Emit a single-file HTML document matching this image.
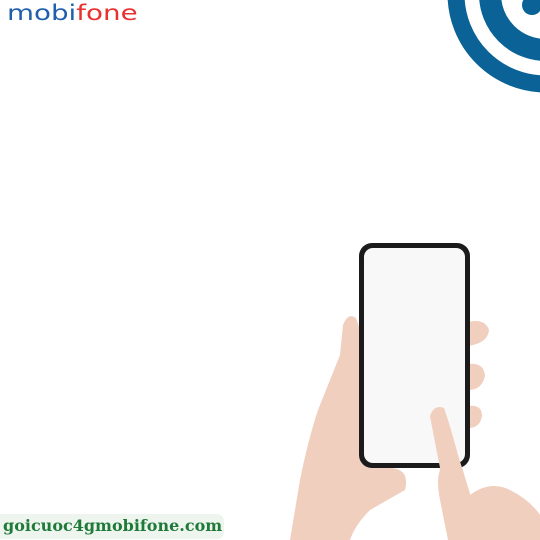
<!DOCTYPE html>
<html><head><meta charset="utf-8"><style>
html,body{margin:0;padding:0;background:#fff;}
body{width:540px;height:540px;position:relative;overflow:hidden;font-family:"Liberation Sans",sans-serif;}
.logo{position:absolute;left:7px;top:1px;font-size:21px;font-family:"DejaVu Sans","Liberation Sans",sans-serif;transform:scaleX(1.32);transform-origin:0 0;}
.logo .b{color:#1f5fae}.logo .r{color:#e8322f}
.tag{position:absolute;left:0;top:514px;width:224px;height:25px;background:#edf5ee;border-radius:0 7px 7px 0;}
.tag span{position:absolute;left:3px;top:2px;font-family:"DejaVu Serif","Liberation Serif",serif;font-weight:bold;font-size:16px;color:#1f7a3a;}
svg{position:absolute;left:0;top:0}
</style></head><body>
<svg width="540" height="540" viewBox="0 0 540 540">
  <g fill="none" stroke="#0b6296">
    <circle cx="546" cy="-6" r="90" stroke-width="17"/>
    <circle cx="546" cy="-6" r="56" stroke-width="22"/>
  </g>
  <circle cx="532" cy="5" r="10" fill="#0b6296"/>
  <g fill="#f1cfbe">
    <path d="M290 540 L300 480 Q308 440 318 410 Q330 380 340 355 L343 325 Q348 312 356 318 L360 330 L362 460 L392 468 Q410 470 405 490 L370 510 Q355 525 350 540 Z"/>
    <path d="M468 322 Q485 318 489 330 Q488 343 468 346 Z"/>
    <path d="M468 364 Q484 362 485 376 Q482 390 468 390 Z"/>
    <path d="M468 406 Q482 404 482 416 Q480 428 468 428 Z"/>
    <path d="M428 415 Q432 405 442 410 Q452 430 460 460 L470 495 Q490 480 510 490 Q530 500 540 515 L540 540 L448 540 L440 500 Q436 480 440 470 Z"/>
  </g>
  <rect x="359" y="243" width="111" height="225" rx="13" fill="#1b1b1b"/>
  <rect x="364" y="248" width="101" height="215" rx="9" fill="#f8f8f8"/>
  <path d="M430 416 Q434 404 444 408 Q450 425 458 455 L472 500 L448 505 Q440 470 430 416Z" fill="#f1cfbe"/>
</svg>
<div class="logo"><span class="b">mobi</span><span class="r">fone</span></div>
<div class="tag"><span>goicuoc4gmobifone.com</span></div>
</body></html>
